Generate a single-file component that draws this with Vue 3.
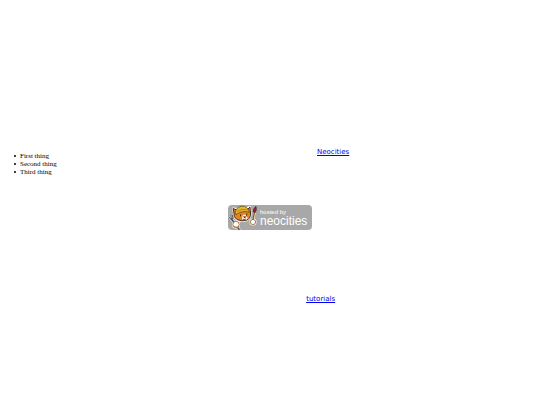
<script setup>
const things = ["First thing", "Second thing", "Third thing"]
</script>

<template>
  <main class="page">
    <section class="intro">
      <ul class="things">
        <li v-for="thing in things" :key="thing">{{ thing }}</li>
      </ul>
      <a class="link" href="#neocities">Neocities</a>
    </section>

    <a class="badge" href="#hosted" aria-label="hosted by neocities">
      <svg class="cat" viewBox="0 0 32 25" aria-hidden="true">
        <!-- white sticker edge -->
        <g fill="#fff" stroke="#fff" stroke-width="2" stroke-linejoin="round" stroke-linecap="round">
          <path d="M5 3.5 9 4Q14 1 19 3L22 2 22.500 8Q23 13 19 15 14 17 9 14.500 5 12 6 8Z" />
          <path d="M25 16 27.500 3" />
          <circle cx="8" cy="19.500" r="3" />
          <circle cx="25" cy="17" r="2.500" />
        </g>
        <path d="M2 12 11 24" stroke="#ddd" stroke-width="3" stroke-linecap="round" />
        <!-- fork -->
        <g fill="none" stroke="#4c5559" stroke-linecap="round">
          <path d="M1 12Q2 15.500 5 13.500L4.500 10.500M2.700 10.500 3.500 14" stroke-width=".9" />
          <path d="M3.500 14 11 24.300" stroke-width="1.500" />
        </g>
        <!-- brush -->
        <path d="M24.500 17 26.500 7" stroke="#8b5a20" stroke-width="1.400" />
        <path d="M25.300 7Q25 3 28 1.500 29 5 27.200 7.500Z" fill="#a51e39" stroke="#4c2028" stroke-width=".8" />
        <!-- head -->
        <path d="M5 3.500 9 5 20 4 22 2 22.500 8Q23 13 19 15 14 17 9 14.500 5 12 6 8Z" fill="#e58320" stroke="#47301a" stroke-width="1" stroke-linejoin="round" />
        <path d="M15 10 17.500 9.500 18.500 12 20 13 18 15 14.500 14.800 14 12.500Z" fill="#fff8e9" />
        <path d="M7 7Q9 1.500 14 1.200 19 1 20.500 5.500L21.500 7.500Q15 5 8 9.500Z" fill="#e5b42c" stroke="#6b4816" stroke-width=".8" />
        <path d="M9 6.500Q14 3 19.500 5" fill="none" stroke="#9b6b18" stroke-width=".6" />
        <path d="M12.500 9.500V11.300M18.700 8.700V10.500" stroke="#382319" stroke-width="1" />
        <path d="M15.500 11.700H17.700L16.700 13ZM15 14.200Q16.500 15 18 13.800" fill="#3b241d" stroke="#3b241d" stroke-width=".6" />
        <!-- paws -->
        <circle cx="8" cy="19.500" r="3.200" fill="#fff" stroke="#8a5a2b" stroke-width=".8" />
        <path d="M5.300 20.500Q7 23 10 21.800" fill="none" stroke="#e18727" stroke-width="1.200" />
        <circle cx="25" cy="17" r="2.600" fill="#fff" stroke="#8a5a2b" stroke-width=".8" />
      </svg>
      <span class="wordmark">
        <span class="hosted">hosted by</span>
        <span class="name">neocities</span>
      </span>
    </a>

    <a class="link tutorials" href="#tutorials">tutorials</a>
  </main>
</template>

<style>
body {
  margin: 0;
  background: #fff;
}
</style>

<style scoped>
.page {
  display: flex;
  flex-direction: column;
  padding-top: 148px;
  color: #000;
  font: 7px/8px "Liberation Serif", serif;
}
.intro {
  display: grid;
  grid-template-columns: 58.7% 1fr;
  align-items: start;
}
.things {
  margin: 4px 0 0;
  padding-left: 14px;
  list-style: none;
}
.things li {
  display: flex;
  align-items: center;
  gap: 4px;
}
/* own bullet, the default marker sits too far from the text at this size */
.things li::before {
  content: "";
  width: 2px;
  height: 2px;
  border-radius: 1px;
  background: currentColor;
}
.link {
  justify-self: start;
  color: #0000ee;
  font: 7px/8px "DejaVu Sans", sans-serif;
}
.badge {
  display: flex;
  align-self: center;
  width: 84px;
  height: 25px;
  margin-top: 29px;
  border-radius: 4px;
  background: #a8a8a8;
  color: #fff;
  text-decoration: none;
}
.cat {
  flex: none;
  width: 32px;
  height: 25px;
  overflow: visible;
}
.wordmark {
  display: flex;
  flex-direction: column;
  padding-top: 4px;
  font-family: "Liberation Sans", Arial, sans-serif;
  white-space: nowrap;
}
.hosted {
  font-size: 6px;
  line-height: 6px;
}
.name {
  font-size: 12px;
  line-height: 12px;
}
.tutorials {
  align-self: flex-start;
  margin-top: 65px;
  margin-left: 56.7%;
}
</style>
